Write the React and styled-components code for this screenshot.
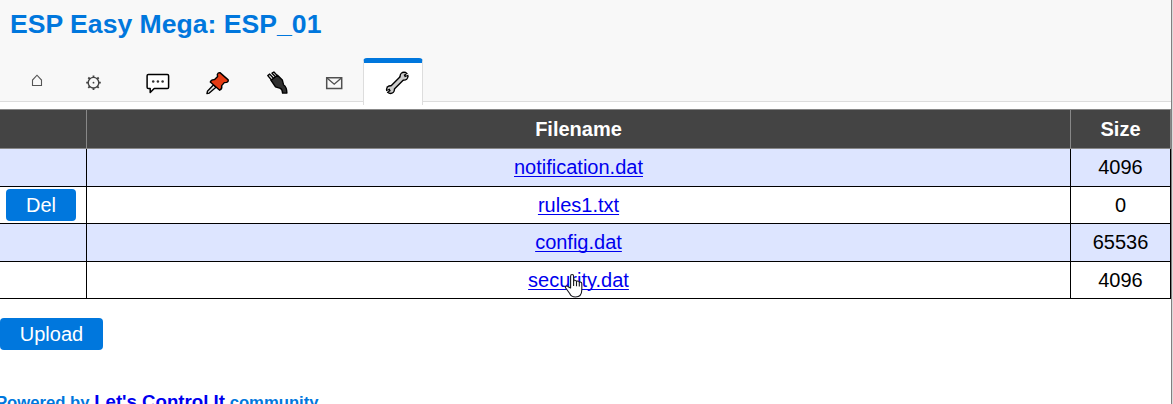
import React from 'react';
import styled, { createGlobalStyle } from 'styled-components';

const GlobalStyle = createGlobalStyle`
  *, *::before, *::after { box-sizing: border-box; }
  html { overflow: hidden; }
  body { margin: 0; background: #fff; overflow: hidden; }
`;

const Screen = styled.div`
  display: flex;
  width: 1173px;
  height: 404px;
  overflow: hidden;
  background: #fff;
  color: #000;
  font-family: 'Liberation Sans', Arial, sans-serif;
  font-size: 20px;
`;

const Page = styled.div`
  display: flex;
  flex-direction: column;
  width: 1171px;
  flex: none;
`;

const WindowEdge = styled.div`
  flex: none;
  width: 2px;
  height: 404px;
  border-left: 1px solid #808080;
  background: #dadada;
`;

const Header = styled.header`
  display: flex;
  flex-direction: column;
  flex: none;
  height: 102px;
  background: #f8f8f8;
  border-bottom: 1px solid #ddd;
`;

const Title = styled.h1`
  flex: none;
  margin: 0;
  padding: 9px 0 0 10px;
  height: 58px;
  font-size: 26.6px;
  line-height: 31px;
  font-weight: 700;
  color: #0077dd;
  white-space: nowrap;
`;

const Menu = styled.nav`
  display: flex;
  height: 47px;
  flex: none;
  padding-left: 7px;
`;

const Tab = styled.a`
  display: flex;
  flex: none;
  justify-content: center;
  align-items: flex-start;
  width: ${(p) => p.$width}px;
  height: 47px;
  padding-top: ${(p) => (p.$active ? 7 : 12)}px;
  ${(p) =>
    p.$active &&
    `
    margin-left: 7px;
    padding-left: 8px;
    background: #fff;
    border: 1px solid #ddd;
    border-top: 5px solid #0077dd;
    border-bottom: 0;
    border-radius: 4px 4px 0 0;
  `}
`;

const Icon = styled.svg`
  display: block;
  flex: none;
  width: 26px;
  height: 26px;
`;

const Table = styled.div`
  display: grid;
  grid-template-columns: 87px 984px 100px;
  grid-template-rows: 40px 38px 37px 38px 37px;
  flex: none;
  margin-top: 7px;
`;

const HeadCell = styled.div`
  display: flex;
  align-items: center;
  justify-content: center;
  background: #444;
  color: #fff;
  font-weight: 700;
  border: solid #888;
  border-width: 1px 1px 1px 0;
`;

const Cell = styled.div`
  display: flex;
  align-items: center;
  justify-content: center;
  line-height: 23px;
  background: ${(p) => (p.$shaded ? '#dde5ff' : '#fff')};
  border: solid #000;
  border-width: 0 1px 1px 0;
`;

const ActionCell = styled(Cell)`
  justify-content: flex-start;
  padding-left: 6px;
`;

const FileLink = styled.a`
  color: #0000ee;
  text-decoration: underline;
  text-decoration-thickness: 1px;
  text-underline-offset: 2px;
  text-decoration-skip-ink: none;
`;

const Button = styled.button`
  flex: none;
  width: ${(p) => p.$width}px;
  height: 32px;
  padding: 0;
  border: 0;
  border-radius: 4px;
  background: #0077dd;
  color: #fff;
  font: inherit;
  line-height: 32px;
`;

const Actions = styled.div`
  display: flex;
  flex: none;
  padding-top: 19px;
  height: 92px;
`;

const Footer = styled.footer`
  flex: none;
  height: 24px;
  margin-left: -4px;
  font-size: 16.67px;
  line-height: 22px;
  font-weight: 700;
  color: #0077dd;
  white-space: nowrap;
`;

const FooterLink = styled.a`
  font-size: 18.67px;
  color: #0000ee;
`;

const Pointer = styled.svg`
  position: absolute;
  left: 564px;
  top: 273px;
  width: 20px;
  height: 26px;
`;

const HomeIcon = () => (
  <Icon viewBox="0 0 26 26">
    <path d="M8.5 15.5V10L13 5.2L17.5 10v5.5z" fill="none" stroke="#555" strokeWidth="1.1" />
  </Icon>
);

const GearIcon = () => (
  <Icon viewBox="0 0 26 26" fill="none" stroke="#444">
    <circle cx="12.5" cy="12.7" r="5.3" strokeWidth="1.4" />
    <circle cx="12.5" cy="12.7" r=".9" fill="#444" stroke="none" />
    <path
      transform="translate(-.5 -.3)"
      strokeWidth="1.8"
      d="M13 5.7v2M13 18.3v2M5.7 13h2M18.3 13h2M7.8 7.8l1.5 1.5M16.7 16.7l1.5 1.5M18.2 7.8l-1.5 1.5M9.3 16.7l-1.5 1.5"
    />
  </Icon>
);

const SpeechIcon = () => (
  <Icon viewBox="0 0 26 26">
    <path
      d="M3.4 4.5h18.9q1.3 0 1.3 1.3v11.4q0 1.3-1.3 1.3H9.2l-4 4v-4H3.4q-1.3 0-1.3-1.3V5.8q0-1.3 1.3-1.3z"
      fill="#fff"
      stroke="#000"
      strokeWidth="1.5"
      strokeLinejoin="round"
    />
    <g fill="#333">
      <circle cx="8.2" cy="11.5" r="1.25" />
      <circle cx="12.9" cy="11.5" r="1.25" />
      <circle cx="17.6" cy="11.5" r="1.25" />
    </g>
  </Icon>
);

const PinIcon = () => (
  <Icon viewBox="0 0 26 26" stroke="#000" strokeLinejoin="round">
    <path d="M8.6 14.8L2.4 21.3L1.9 23.6L4.3 23.1L11 17.2z" fill="#ddd" strokeWidth="1.3" />
    <path
      d="M12.3 4.4q.8-2 2.6-1.8l8.3 7.3q.4 1.8-1.6 2.5l-2.3.2-2.6 3q.6 3.6-2 4.6L5.3 12q.7-2.6 4.3-2.4l3-3z"
      fill="#e63c14"
      strokeWidth="1.4"
    />
  </Icon>
);

const PlugIcon = () => (
  <Icon viewBox="0 0 26 26" stroke="#000" strokeLinejoin="round">
    <path d="M6.5 10L2.8 5.6L4.7 4.1L8.5 8.3M10.5 6.8L7 3.2L8.9 2L12.5 5.9" fill="#eee" strokeWidth="1.4" />
    <path
      d="M5.9 10.2l6.6-5 4.8 4.7 1.2 4.8q3.4 2.4 3.4 8.4h-4.3q-.2-3.8-2.2-4.8l-4.9-1.4z"
      fill="#303030"
      strokeWidth="1.4"
    />
  </Icon>
);

const MailIcon = () => (
  <Icon viewBox="0 0 26 26" fill="none" stroke="#505050" strokeWidth="1.5">
    <path d="M4.7 7.7h15v10.7h-15z" />
    <path d="M5 8l7.2 6.2L19.4 8" strokeWidth="1.4" />
  </Icon>
);

const WrenchIcon = () => (
  <Icon viewBox="0 0 26 26">
    <path d="M6.5 19.6L20 6.2" stroke="#000" strokeWidth="6" />
    <circle cx="20" cy="6.2" r="4.6" />
    <circle cx="6.5" cy="19.6" r="4.6" />
    <g fill="#ccc">
      <circle cx="20" cy="6.2" r="3.2" />
      <circle cx="6.5" cy="19.6" r="3.2" />
    </g>
    <path d="M6.5 19.6L20 6.2" stroke="#ccc" strokeWidth="3.2" />
    <path d="M20.2 6L23.6 4.4M6.2 19.8L2.9 21.5" stroke="#000" strokeWidth="2.8" />
    <path d="M21.8 5.2L24.8 3.8M4.6 20.6L1.6 22.1" stroke="#fff" strokeWidth="1" />
  </Icon>
);

const HandPointer = () => (
  <Pointer viewBox="0 0 20 26">
    <path
      d="M6.6 15V3.3q0-1.8 1.5-1.8t1.5 1.8v5q.2-1.3 1.5-1.1 1.2.1 1.4 1.6.3-1 1.5-.8 1.2.2 1.3 1.5.4-.7 1.4-.4 1.1.3 1.1 1.6v6.1q0 7.2-6.3 7.2-4.3 0-5.8-3.5l-3.8-5.2q-1.2-1.5.1-2.1 1.2-.6 2.5.7z"
      fill="#fff"
      stroke="#16161d"
      strokeWidth="1.1"
      strokeLinejoin="round"
    />
    <path d="M9.6 8v5M12.5 8.8v4.4M15.3 9.5v3.9" stroke="#16161d" strokeWidth="1.1" />
  </Pointer>
);

const tabs = [
  { id: 'main', width: 59, Glyph: HomeIcon },
  { id: 'config', width: 55, Glyph: GearIcon },
  { id: 'controllers', width: 73, Glyph: SpeechIcon },
  { id: 'hardware', width: 47, Glyph: PinIcon },
  { id: 'devices', width: 73, Glyph: PlugIcon },
  { id: 'notifications', width: 42, Glyph: MailIcon },
  { id: 'tools', width: 60, Glyph: WrenchIcon, active: true },
];

const files = [
  { name: 'notification.dat', size: 4096 },
  { name: 'rules1.txt', size: 0, removable: true },
  { name: 'config.dat', size: 65536 },
  { name: 'security.dat', size: 4096 },
];

export default function App() {
  return (
    <Screen>
      <GlobalStyle />
      <Page>
        <Header>
          <Title>ESP Easy Mega: ESP_01</Title>
          <Menu>
            {tabs.map(({ id, width, Glyph, active }) => (
              <Tab key={id} $width={width} $active={active}>
                <Glyph />
              </Tab>
            ))}
          </Menu>
        </Header>
        <Table>
          <HeadCell />
          <HeadCell>Filename</HeadCell>
          <HeadCell>Size</HeadCell>
          {files.map((file, i) => (
            <React.Fragment key={file.name}>
              <ActionCell $shaded={i % 2 === 0}>
                {file.removable && <Button $width={70}>Del</Button>}
              </ActionCell>
              <Cell $shaded={i % 2 === 0}>
                <FileLink>{file.name}</FileLink>
              </Cell>
              <Cell $shaded={i % 2 === 0}>{file.size}</Cell>
            </React.Fragment>
          ))}
        </Table>
        <Actions>
          <Button $width={103}>Upload</Button>
        </Actions>
        <Footer>
          Powered by <FooterLink>Let's Control It</FooterLink> community
        </Footer>
      </Page>
      <WindowEdge />
      <HandPointer />
    </Screen>
  );
}
